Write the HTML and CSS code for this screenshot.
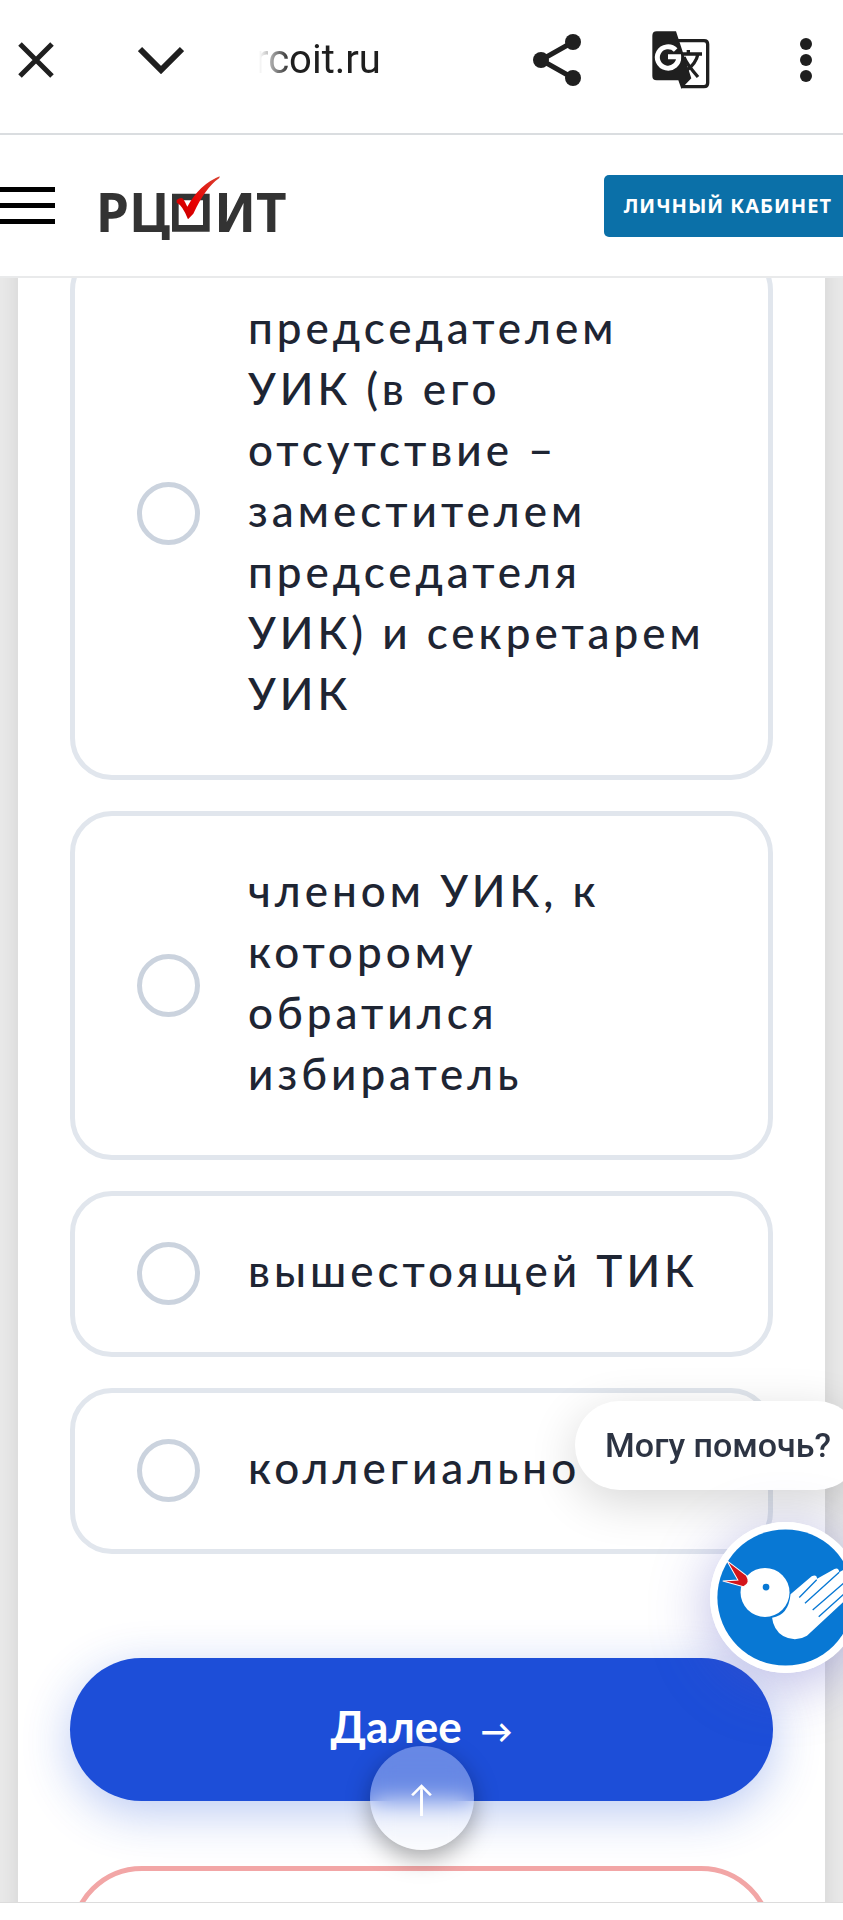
FILE: index.html
```html
<!DOCTYPE html>
<html lang="ru">
<head>
    <meta charset="UTF-8">
    <meta name="viewport" content="width=device-width, initial-scale=1.0">
    <title>РЦОИТ</title>
    <link rel="stylesheet" href="styles.css">
</head>
<body>
    <div class="browser-bar">
        <button class="icon-btn close-btn" aria-label="Закрыть">
            <svg width="36" height="36" viewBox="0 0 36 36"><path d="M2 2L34 34M34 2L2 34" stroke="#1f1f1f" stroke-width="5" fill="none"/></svg>
        </button>
        <button class="icon-btn expand-btn" aria-label="Свернуть">
            <svg width="46" height="28" viewBox="0 0 46 28"><path d="M2 3L23 24L44 3" stroke="#1f1f1f" stroke-width="6" fill="none"/></svg>
        </button>
        <div class="url">rcoit.ru</div>
        <button class="icon-btn share-btn" aria-label="Поделиться">
            <svg width="48" height="52" viewBox="0 0 48 52">
                <path d="M40 8L8 26L40 44" stroke="#1f1f1f" stroke-width="5" fill="none"/>
                <circle cx="40" cy="8" r="8" fill="#1f1f1f"/>
                <circle cx="8" cy="26" r="8" fill="#1f1f1f"/>
                <circle cx="40" cy="44" r="8" fill="#1f1f1f"/>
            </svg>
        </button>
        <button class="icon-btn translate-btn" aria-label="Перевести">
            <svg width="58" height="58" viewBox="0 0 174 174">
                <path d="M77 29H156Q167 29 167 40V156Q167 167 156 167H88" fill="none" stroke="#1f1f1f" stroke-width="10"/>
                <path d="M14 1H72L118 142L88 173L79 148H14Q1 148 1 135V14Q1 1 14 1Z" fill="#1f1f1f"/>
                <path d="M71 57A32 32 0 1 0 80 77H48" fill="none" stroke="#fff" stroke-width="15"/>
                <path d="M90 69H150M109 57V69M138 69Q132 98 103 119M96 78Q104 99 138 138" fill="none" stroke="#1f1f1f" stroke-width="10"/>
            </svg>
        </button>
        <button class="icon-btn" aria-label="Меню браузера">
            <svg width="12" height="44" viewBox="0 0 12 44"><g fill="#1f1f1f"><circle cx="6" cy="6" r="6"/><circle cx="6" cy="22" r="6"/><circle cx="6" cy="38" r="6"/></g></svg>
        </button>
    </div>

    <header class="site-header">
        <button class="burger" aria-label="Меню"><span></span><span></span><span></span></button>
        <a class="logo" href="#" aria-label="РЦОИТ">
            <span>РЦ</span>
            <svg class="logo-check" width="52" height="58" viewBox="0 0 156 174">
                <defs>
                    <linearGradient id="check" x1="0" y1="1" x2="1" y2="0">
                        <stop offset="0" stop-color="#c00000"/>
                        <stop offset="0.4" stop-color="#e80000"/>
                        <stop offset="1" stop-color="#d84030"/>
                    </linearGradient>
                </defs>
                <path d="M16 63H109V157H16Z" fill="none" stroke="#333" stroke-width="20"/>
                <path d="M20 72Q32 62 39 68Q46 78 52 92Q89 25 149 1L148 6Q106 35 70 113L54 130Q38 88 20 80Z" fill="url(#check)"/>
            </svg>
            <span>ИТ</span>
        </a>
        <a class="account-btn" href="#">ЛИЧНЫЙ КАБИНЕТ</a>
    </header>

    <main class="page">
        <form class="quiz">
            <div class="options">
                <label class="option">
                    <input type="radio" name="answer">
                    <span>председателем УИК (в его отсутствие – заместителем председателя УИК) и секретарем УИК</span>
                </label>
                <label class="option">
                    <input type="radio" name="answer">
                    <span>членом УИК, к которому обратился избиратель</span>
                </label>
                <label class="option">
                    <input type="radio" name="answer">
                    <span>вышестоящей ТИК</span>
                </label>
                <label class="option">
                    <input type="radio" name="answer">
                    <span>коллегиально</span>
                </label>
            </div>
            <button class="next-btn" type="button">Далее <span class="arrow">→</span></button>
            <div class="notice"></div>
        </form>
    </main>
    <div class="bottom-bar"></div>

    <div class="help-bubble">Могу помочь?</div>
    <button class="help-btn" aria-label="Помощник">
        <svg viewBox="511 457 450 450">
            <circle cx="736" cy="682" r="225" fill="#fff"/>
            <circle cx="736" cy="682" r="203" fill="#0878d4"/>
            <path d="M696 742Q745 735 751 672L814 619Q829 612 830 626L882 597Q895 592 896 607L925 590V680L800 796Q765 817 729 797Q700 778 696 742Z" fill="#fff"/>
            <path d="M777 682L829 629M794 699L896 607M817 719L915 634M835 739L911 671" stroke="#0878d4" stroke-width="4" fill="none"/>
            <circle cx="675" cy="667" r="73" fill="#fff"/>
            <circle cx="678" cy="651" r="10" fill="#0878d4"/>
            <path d="M561 572L619 616Q634 640 611 650L549 633L594 630Z" fill="#d4151b" stroke="#fff" stroke-width="3"/>
        </svg>
    </button>
    <button class="up-btn" aria-label="Наверх">↑</button>
</body>
</html>
```
FILE: styles.css
```css
* {
    box-sizing: border-box;
}
body {
    display: flex;
    flex-direction: column;
    height: 100vh;
    margin: 0;
    overflow: hidden;
    font-family: Lato, "Noto Sans", sans-serif;
    background-color: #fff;
    color: #1e2533;
}
button {
    padding: 0;
    border: none;
    background: none;
    font-family: inherit;
    cursor: pointer;
}
svg {
    display: block;
}

/* browser bar */
.browser-bar {
    display: flex;
    align-items: center;
    flex-shrink: 0;
    height: 135px;
    padding: 0 31px 14px 18px;
    border-bottom: 2px solid #dadde0;
}
.icon-btn {
    flex-shrink: 0;
}
.expand-btn {
    margin: 0 71px 0 84px;
}
.url {
    flex: 1;
    font-family: Roboto, sans-serif;
    font-size: 40px;
    color: #1f1f1f;
    -webkit-mask-image: linear-gradient(to right, transparent 4px, #000 36px);
    mask-image: linear-gradient(to right, transparent 4px, #000 36px);
}
.translate-btn {
    margin: 0 90px 0 71px;
}

/* site header */
.site-header {
    display: flex;
    align-items: center;
    flex-shrink: 0;
    height: 143px;
    border-bottom: 2px solid #e9eaeb;
}
.burger {
    display: flex;
    flex-direction: column;
    gap: 11px;
    width: 55px;
}
.burger span {
    height: 5px;
    background-color: #000;
}
.logo {
    display: flex;
    align-items: center;
    margin-left: 41px;
    padding-top: 12px;
    font-family: "Noto Sans", sans-serif;
    font-size: 53px;
    font-weight: 700;
    line-height: 60px;
    color: #333;
    text-decoration: none;
}
.logo-check {
    margin: 0 -8px 14px 0;
}
.account-btn {
    margin-left: auto;
    padding: 0 11px 0 20px;
    border-radius: 5px 0 0 5px;
    background-color: #0b70a8;
    font-family: "Noto Sans", sans-serif;
    font-size: 20px;
    font-weight: 700;
    line-height: 62px;
    letter-spacing: 1px;
    color: #fff;
    text-decoration: none;
}

/* quiz */
.page {
    flex: 1;
    min-height: 0;
    padding: 0 18px;
    overflow: hidden;
    background-color: #e9e9e9;
}
.quiz {
    margin-top: -60px;
    padding: 30px 52px 0;
    background-color: #fff;
    box-shadow: 0 0 20px rgba(0, 0, 0, 0.1);
}
.options {
    display: flex;
    flex-direction: column;
    gap: 31px;
}
.option {
    display: flex;
    align-items: center;
    gap: 48px;
    padding: 44px 58px 45px 62px;
    border: 5px solid #e1e6ed;
    border-radius: 42px;
    font-size: 44px;
    font-weight: 500;
    line-height: 61px;
    letter-spacing: 4px;
}
.option span {
    padding-bottom: 6px;
}
.option input {
    appearance: none;
    flex-shrink: 0;
    width: 63px;
    height: 63px;
    margin: 0;
    border: 5px solid #cbd3de;
    border-radius: 50%;
}
.next-btn {
    display: block;
    width: 100%;
    margin: 104px 0 65px;
    padding-bottom: 6px;
    border-radius: 72px;
    background-color: #1d4ed8;
    box-shadow: 0 12px 48px rgba(29, 78, 216, 0.3);
    font-size: 44px;
    font-weight: 700;
    line-height: 137px;
    color: #fff;
}
.arrow {
    margin-left: 8px;
    font-size: 32px;
    line-height: 1;
}
.notice {
    height: 160px;
    border: 5px solid #f2a6a6;
    border-radius: 72px;
}
.bottom-bar {
    flex-shrink: 0;
    height: 18px;
    border-top: 1px solid #dcdcdc;
}

/* floating widgets */
.help-bubble {
    position: fixed;
    right: -18px;
    bottom: 430px;
    padding: 0 30px;
    border-radius: 45px;
    background-color: #fff;
    box-shadow: 0 12px 48px rgba(0, 0, 0, 0.16);
    font-family: Roboto, sans-serif;
    font-size: 34px;
    font-weight: 500;
    line-height: 89px;
    color: #2d3443;
}
.help-btn {
    position: fixed;
    right: -18px;
    bottom: 247px;
    width: 151px;
    height: 151px;
    border-radius: 50%;
    box-shadow: 0 12px 60px rgba(80, 80, 190, 0.4);
}
.up-btn {
    position: fixed;
    left: 50%;
    bottom: 70px;
    width: 104px;
    height: 104px;
    margin-left: -52px;
    border-radius: 50%;
    background-color: rgba(255, 255, 255, 0.33);
    -webkit-backdrop-filter: blur(12px);
    backdrop-filter: blur(12px);
    box-shadow: 0 8px 24px rgba(0, 0, 0, 0.35);
    font-size: 36px;
    color: #fff;
}
```
